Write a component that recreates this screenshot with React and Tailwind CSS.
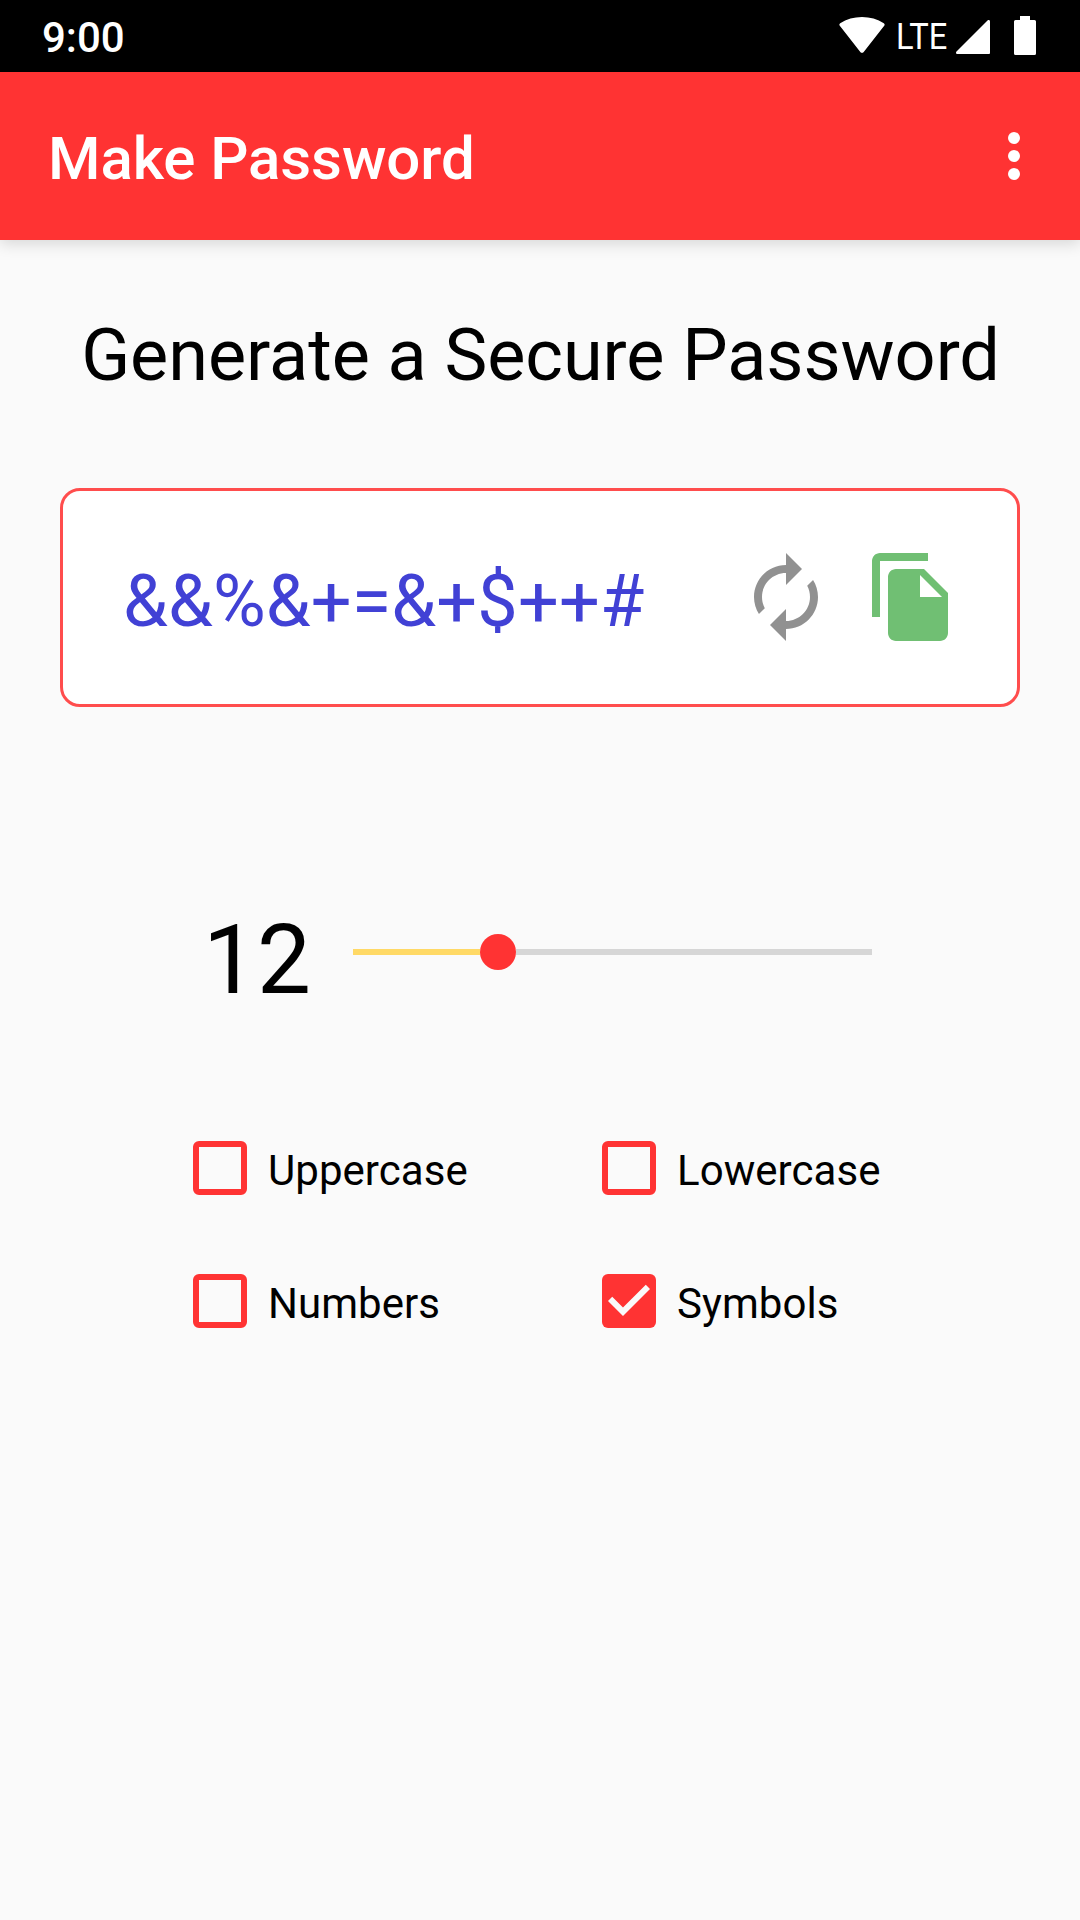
const checkboxes = [
  { label: 'Uppercase', checked: false },
  { label: 'Lowercase', checked: false },
  { label: 'Numbers', checked: false },
  { label: 'Symbols', checked: true },
];

function StatusBar() {
  return (
    <div className="flex h-[72px] items-start justify-between bg-black pl-[42px] pr-11 text-white">
      <span className="mt-[13px] text-[42px] leading-[49px] font-medium">9:00</span>
      <div className="flex items-start">
        <svg className="mt-[17px] h-[36px] w-[46px]" viewBox="0 0 46 36" fill="#fff">
          <path d="M1.2 6.2C7.500 2 15 0 23 0s15.500 2 21.800 6.200c1 .7 1.100 1.700.4 2.600L24.700 34.900c-.9 1.200-2.500 1.200-3.400 0L.8 8.800C.1 7.900.2 6.900 1.200 6.200z" />
        </svg>
        <span className="mt-[15px] ml-[11px] w-[50px] origin-left scale-x-[0.87] text-[37.500px] leading-[43px] font-normal">LTE</span>
        <svg className="mt-[20px] ml-[10px] h-[34px] w-[34px]" viewBox="0 0 34 34" fill="#fff">
          <path d="M31.500.5C32.500-.4 34 0 34 1.500V33a1 1 0 0 1-1 1H1.500C0 34-.4 32.500.5 31.500z" />
        </svg>
        <svg className="mt-4 ml-6 h-[39px] w-[22px]" viewBox="0 0 22 39" fill="#fff">
          <path d="M6 0h10v4h4.500a1.500 1.500 0 0 1 1.500 1.500v32a1.500 1.500 0 0 1-1.500 1.500h-19A1.500 1.500 0 0 1 0 37.500v-32A1.500 1.500 0 0 1 1.500 4H6z" />
        </svg>
      </div>
    </div>
  );
}

function AppBar() {
  return (
    <header className="flex h-[168px] items-start justify-between bg-[#ff3333] pr-[60px] pl-12 text-white shadow-[0_4px_14px_rgba(0,0,0,0.14)]">
      <h1 className="mt-[51px] text-[60px] leading-[71px] font-medium tracking-[-0.08px]">Make Password</h1>
      <div className="mt-[60px] flex flex-col gap-[6px]">
        <i className="size-3 rounded-full bg-white" />
        <i className="size-3 rounded-full bg-white" />
        <i className="size-3 rounded-full bg-white" />
      </div>
    </header>
  );
}

function PasswordCard() {
  return (
    <div className="mx-[60px] mt-[90px] flex h-[219px] items-center rounded-[20px] border-[3px] border-[#ff4d4d] bg-white pr-[57px] pl-[60px]">
      <span className="flex-1 pt-[8px] text-[72px] leading-[85px] tracking-[0.15px] text-[#4141d5]">{'&&%&+=&+$++#'}</span>
      <svg className="mb-px size-24" viewBox="0 0 24 24" fill="#919191">
        <path d="M12 6v3l4-4-4-4v3c-4.420 0-8 3.580-8 8 0 1.570.46 3.030 1.240 4.260L6.700 14.800c-.45-.83-.7-1.790-.7-2.800 0-3.310 2.690-6 6-6zm6.760 1.740L17.300 9.200c.44.84.7 1.790.7 2.800 0 3.310-2.690 6-6 6v-3l-4 4 4 4v-3c4.420 0 8-3.580 8-8 0-1.570-.46-3.030-1.240-4.260z" />
      </svg>
      <svg className="mb-px ml-[30px] size-24" viewBox="0 0 24 24" fill="#70bf73">
        <path d="M16 1H4c-1.100 0-2 .9-2 2v14h2V3h12V1zm-1 4l6 6v10c0 1.100-.9 2-2 2H7.990C6.890 23 6 22.100 6 21V7c0-1.100.89-2 1.990-2H15zm-1 7h5.500L14 6.500V12z" />
      </svg>
    </div>
  );
}

function LengthSlider() {
  return (
    <div className="mt-[190px] ml-[203px] flex h-[110px] items-start">
      <span className="mt-[7px] w-[150px] text-[96px] leading-[112px]">12</span>
      <div className="mt-[37px] flex items-center">
        <div className="h-[6px] w-[127px] bg-[#ffd966]" />
        <div className="size-9 rounded-full bg-[#ff3333]" />
        <div className="h-[6px] w-[356px] bg-[#d6d6d6]" />
      </div>
    </div>
  );
}

function Option({ label, checked }) {
  return (
    <label className="flex h-[54px] items-start">
      {checked ? (
        <svg className="size-[54px]" viewBox="3 3 18 18">
          <rect x="3" y="3" width="18" height="18" rx="2" fill="#ff3333" />
          <path d="M10 17l-5-5 1.410-1.410L10 14.170l7.590-7.590L19 8z" fill="#fafafa" />
        </svg>
      ) : (
        <span className="size-[54px] rounded-[6px] border-[6px] border-[#ff3333]" />
      )}
      <span className="mt-[5px] ml-[21px] text-[42px] leading-[49px] tracking-[0.05px]">{label}</span>
    </label>
  );
}

export default function App() {
  return (
    <div className="h-[1920px] w-[1080px] overflow-hidden bg-[#fafafa] font-['Roboto',sans-serif] text-black">
      <StatusBar />
      <AppBar />
      <main>
        <h2 className="mt-[73px] pl-px text-center text-[72px] leading-[85px] tracking-[-0.05px] whitespace-nowrap">Generate a Secure Password</h2>
        <PasswordCard />
        <LengthSlider />
        <div className="mt-[134px] ml-[193px] grid grid-cols-[409px_409px] gap-y-[79px]">
          {checkboxes.map((c) => (
            <Option key={c.label} {...c} />
          ))}
        </div>
      </main>
    </div>
  );
}
